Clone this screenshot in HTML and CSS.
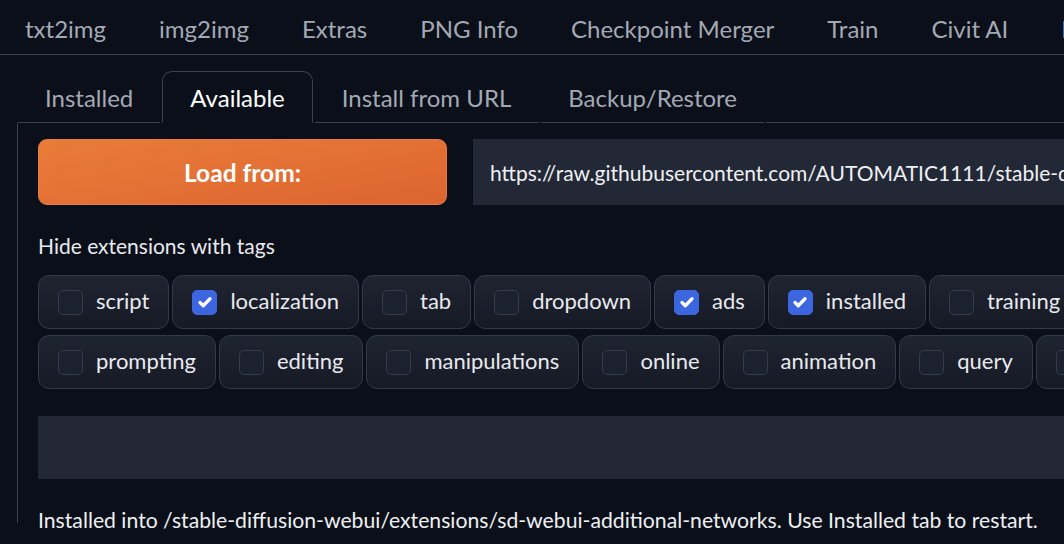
FILE: index.html
```html
<!DOCTYPE html>
<html>
<head>
<meta charset="utf-8">
<link rel="stylesheet" href="styles.css">
</head>
<body>
<nav class="topnav">
  <span class="tn">txt2img</span>
  <span class="tn">img2img</span>
  <span class="tn">Extras</span>
  <span class="tn">PNG Info</span>
  <span class="tn">Checkpoint Merger</span>
  <span class="tn">Train</span>
  <span class="tn">Civit AI</span>
  <span class="tn">Dreambooth</span>
</nav>
<div class="ext">
  <div class="subtabs">
    <span class="st">Installed</span>
    <span class="st active">Available</span>
    <span class="st">Install from URL</span>
    <span class="st">Backup/Restore</span>
    <span class="st-fill"></span>
  </div>
  <div class="panel">
    <div class="loadrow">
      <button class="loadbtn">Load from:</button>
      <div class="urlbox">https://raw.githubusercontent.com/AUTOMATIC1111/stable-diffusion-webui-extensions/master/index.json</div>
    </div>
    <div class="lbl">Hide extensions with tags</div>
    <div class="tags">
      <div class="tagrow">
        <label class="tag"><span class="cb"></span><span class="tx">script</span></label>
        <label class="tag"><span class="cb on"><svg viewBox="0 0 16 16"><path d="M4 8.4l2.6 2.6L12 5.4"/></svg></span><span class="tx">localization</span></label>
        <label class="tag"><span class="cb"></span><span class="tx">tab</span></label>
        <label class="tag"><span class="cb"></span><span class="tx">dropdown</span></label>
        <label class="tag"><span class="cb on"><svg viewBox="0 0 16 16"><path d="M4 8.4l2.6 2.6L12 5.4"/></svg></span><span class="tx">ads</span></label>
        <label class="tag"><span class="cb on"><svg viewBox="0 0 16 16"><path d="M4 8.4l2.6 2.6L12 5.4"/></svg></span><span class="tx">installed</span></label>
        <label class="tag"><span class="cb"></span><span class="tx">training</span></label>
      </div>
      <div class="tagrow">
        <label class="tag"><span class="cb"></span><span class="tx">prompting</span></label>
        <label class="tag"><span class="cb"></span><span class="tx">editing</span></label>
        <label class="tag"><span class="cb"></span><span class="tx">manipulations</span></label>
        <label class="tag"><span class="cb"></span><span class="tx">online</span></label>
        <label class="tag"><span class="cb"></span><span class="tx">animation</span></label>
        <label class="tag"><span class="cb"></span><span class="tx">query</span></label>
        <label class="tag"><span class="cb"></span><span class="tx">science</span></label>
      </div>
    </div>
    <div class="emptybox"></div>
    <div class="msg">Installed into /stable-diffusion-webui/extensions/sd-webui-additional-networks. Use Installed tab to restart.</div>
  </div>
</div>
</body>
</html>
```

FILE: styles.css
```css
* { box-sizing: border-box; }
html, body {
  margin: 0;
  padding: 0;
  background: #0b0f19;
  overflow: hidden;
  width: 1064px;
  height: 544px;
}
body {
  font-family: "Lato", "Open Sans", sans-serif;
  color: #e5e7eb;
}
.topnav {
  display: flex;
  gap: 53px;
  padding-left: 25px;
  height: 55px;
  border-bottom: 1px solid #374151;
  align-items: center;
  white-space: nowrap;
  overflow: hidden;
}
.tn {
  font-size: 24px;
  color: #a3a9b4;
  flex: none;
  position: relative;
  top: 1px;
}
.ext {
  padding: 16px 0 0 17px;
}
.subtabs {
  display: flex;
  align-items: flex-end;
  height: 52px;
  white-space: nowrap;
}
.st {
  flex: none;
  height: 52px;
  padding: 0 27px;
  display: flex;
  align-items: center;
  font-size: 24px;
  color: #a3a9b4;
  border: 1px solid transparent;
  border-bottom: 1px solid #374151;
  border-radius: 10px 10px 0 0;
  margin-right: 1px;
}
.st.active {
  color: #ffffff;
  border-color: #374151;
  border-bottom-color: #0b0f19;
}
.st-fill {
  flex: 1;
  border-bottom: 1px solid #374151;
}
.panel {
  border-left: 1px solid #374151;
  padding: 16px 0 0 20px;
  height: 400px;
}
.loadrow {
  display: flex;
  gap: 26px;
  height: 66px;
}
.loadbtn {
  flex: none;
  width: 409px;
  height: 66px;
  border: 1px solid #ea7b3c;
  border-radius: 9px;
  background: linear-gradient(170deg, #e97c39 0%, #dd6430 100%);
  color: #ffffff;
  font-family: inherit;
  font-weight: 700;
  font-size: 24.5px;
  padding: 0;
}
.urlbox {
  flex: none;
  width: 600px;
  height: 66px;
  background: #232836;
  padding-left: 17px;
  display: flex;
  align-items: center;
  font-size: 21px;
  color: #eef0f3;
  white-space: nowrap;
  overflow: hidden;
}
.lbl {
  margin-top: 29px;
  font-size: 21px;
  color: #e8eaee;
  line-height: 24px;
  height: 24px;
}
.tags {
  margin-top: 17px;
  display: flex;
  flex-direction: column;
  gap: 6px;
}
.tagrow {
  display: flex;
  gap: 3px;
  white-space: nowrap;
}
.tag {
  flex: none;
  height: 54px;
  display: flex;
  align-items: center;
  padding: 0 19px;
  gap: 13px;
  border: 1px solid #323949;
  border-radius: 11px;
  background: linear-gradient(180deg, #1f2431 0%, #161a25 100%);
  font-size: 22px;
  color: #e8eaee;
}
.tx {
  padding-bottom: 3px;
}
.cb {
  width: 25px;
  height: 25px;
  border-radius: 5px;
  border: 1px solid #353c4b;
  background: #1c2130;
  display: flex;
  align-items: center;
  justify-content: center;
}
.cb.on {
  background: #3b66e0;
  border-color: #3b66e0;
}
.cb svg {
  width: 20px;
  height: 20px;
  fill: none;
  stroke: #ffffff;
  stroke-width: 2.6;
  stroke-linecap: round;
  stroke-linejoin: round;
}
.emptybox {
  margin-top: 27px;
  height: 63px;
  background: #232836;
}
.msg {
  margin-top: 28px;
  font-size: 21.2px;
  color: #eef0f3;
  white-space: nowrap;
}
```
